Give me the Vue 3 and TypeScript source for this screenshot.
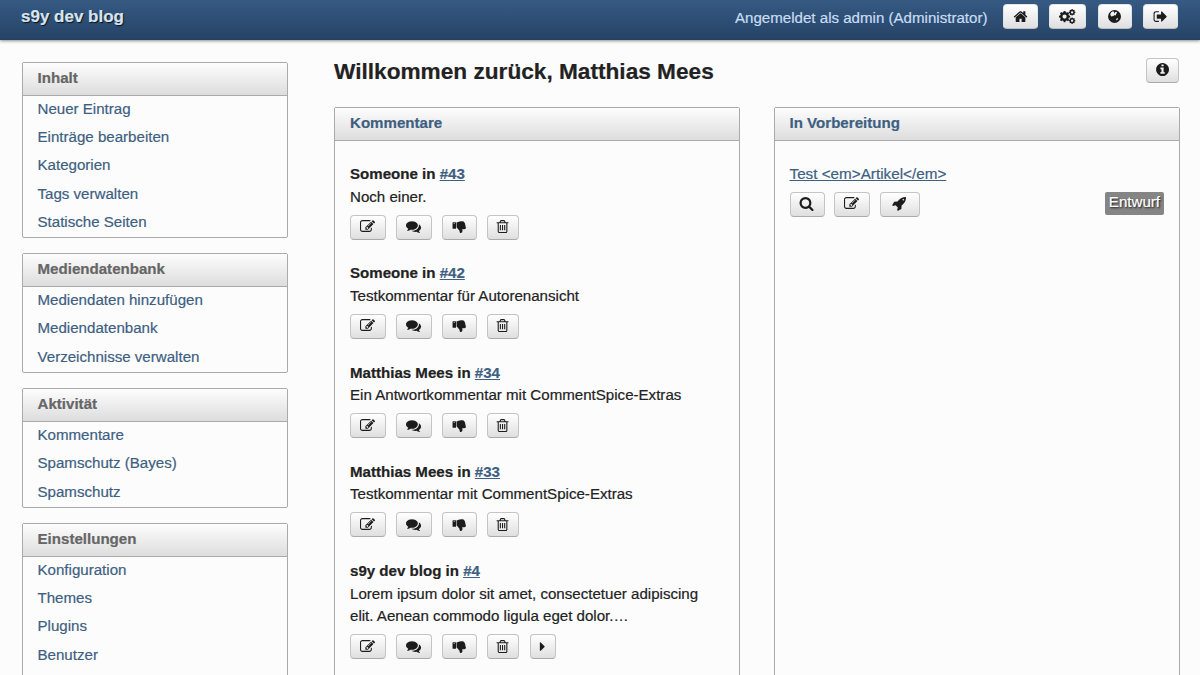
<script setup lang="ts">
type IconName =
  | 'home' | 'cogs' | 'globe' | 'signout' | 'info' | 'edit'
  | 'comments' | 'thumbs' | 'trash' | 'caret' | 'search' | 'rocket'

interface NavGroup { title: string; links: string[] }
interface Comment { author: string; id: number; text: string; more?: boolean }

const icons: Record<IconName, string> = {
  home: 'M1472 992v480q0 26-19 45t-45 19h-384v-384h-256v384h-384q-26 0-45-19t-19-45v-480q0-1 .5-3t.5-3l575-474 575 474q1 2 1 6zm223-69l-62 74q-8 9-21 11h-3q-13 0-21-7l-692-577-692 577q-12 8-24 7-13-2-21-11l-62-74q-8-10-7-23.5t11-21.5l719-599q32-26 76-26t76 26l244 204v-195q0-14 9-23t23-9h192q14 0 23 9t9 23v408l219 182q10 8 11 21.5t-7 23.5z',
  cogs: '',
  globe: 'M896 128A768 768 0 1 0 896 1664A768 768 0 1 0 896 128zM700 270L820 330L870 400L820 470L880 520L990 370L1090 330L1190 420L1150 520L1060 590L1090 680L1000 760L880 720L800 800L690 850L620 810L600 930L470 830L390 690L420 500L550 350zM1140 1120L1300 1080L1290 1220L1170 1330L1080 1300z',
  signout: 'M704 1440q0 4 1 20t.5 26.5-3 23.5-10 19.5-20.5 6.5h-320q-119 0-203.5-84.5t-84.5-203.5v-704q0-119 84.5-203.5t203.5-84.5h320q13 0 22.5 9.5t9.5 22.5q0 4 1 20t.5 26.5-3 23.5-10 19.5-20.5 6.5h-320q-66 0-113 47t-47 113v704q0 66 47 113t113 47h312l11.5 1 11.5 3 8 5.5 7 9 2 13.5zm928-544q0 26-19 45l-544 544q-19 19-45 19t-45-19-19-45v-288h-448q-26 0-45-19t-19-45v-384q0-26 19-45t45-19h448v-288q0-26 19-45t45-19 45 19l544 544q19 19 19 45z',
  info: 'M1152 1376v-160q0-14-9-23t-23-9h-96v-512q0-14-9-23t-23-9h-320q-14 0-23 9t-9 23v160q0 14 9 23t23 9h96v320h-96q-14 0-23 9t-9 23v160q0 14 9 23t23 9h448q14 0 23-9t9-23zm-128-896v-160q0-14-9-23t-23-9h-192q-14 0-23 9t-9 23v160q0 14 9 23t23 9h192q14 0 23-9t9-23zm640 416q0 209-103 385.5t-279.5 279.5-385.5 103-385.5-103-279.5-279.5-103-385.5 103-385.5 279.5-279.5 385.5-103 385.5 103 279.5 279.5 103 385.5z',
  edit: 'M888 1184l116-116-152-152-116 116v56h96v96h56zm440-720q-16-16-33 1l-350 350q-17 17-1 33t33-1l350-350q17-17 1-33zm80 594v190q0 119-84.5 203.5t-203.5 84.5h-832q-119 0-203.5-84.5t-84.5-203.5v-832q0-119 84.5-203.5t203.5-84.5h832q63 0 117 25 15 7 18 23 3 17-9 29l-49 49q-14 14-32 8-23-6-45-6h-832q-66 0-113 47t-47 113v832q0 66 47 113t113 47h832q66 0 113-47t47-113v-126q0-13 9-22l64-64q15-15 35-7t20 29zm-96-738l288 288-672 672h-288v-288zm444 132l-92 92-288-288 92-92q28-28 68-28t68 28l152 152q28 28 28 68t-28 68z',
  comments: 'M1408 768q0 139-94 257t-256.5 186.5-353.5 68.5q-86 0-176-16-124 88-278 128-36 9-86 16h-3q-11 0-20.5-8t-11.5-21q-1-3-1-6.5t.5-6.5 2-6l2.5-5 3.5-5.5 4-5 4.5-5 4-4.5q5-6 23-25t26-29.5 22.5-29 25-38.5 20.5-44q-124-72-195-177t-71-224q0-139 94-257t256.5-186.5 353.5-68.5 353.5 68.5 256.5 186.5 94 257zm384 256q0 120-71 224.5t-195 176.5q10 24 20.5 44t25 38.5 22.5 29 26 29.5 23 25q1 1 4 4.5t4.5 5 4 5 3.5 5.5l2.5 5 2 6 .5 6.5-1 6.5q-3 14-13 22t-22 7q-50-7-86-16-154-40-278-128-90 16-176 16-271 0-472-132 58 4 88 4 161 0 309-45t264-129q125-92 192-212t67-254q0-77-23-152 129 71 204 178t75 230z',
  thumbs: 'M128 384Q64 384 64 448V1088Q64 1152 128 1152H416Q480 1152 480 1088V448Q480 384 416 384zM256 450A64 64 0 1 1 256 578A64 64 0 1 1 256 450zM544 384Q640 370 790 315Q940 256 1080 256H1230Q1500 256 1500 490Q1590 570 1568 700Q1640 790 1600 900Q1664 980 1664 1050Q1650 1216 1472 1216H1195Q1248 1330 1248 1440Q1248 1664 1024 1664Q960 1664 930 1590Q905 1520 890 1430Q870 1350 790 1280L640 1085Q590 1024 544 1024z',
  trash: 'M704 736v576q0 14-9 23t-23 9h-64q-14 0-23-9t-9-23v-576q0-14 9-23t23-9h64q14 0 23 9t9 23zm256 0v576q0 14-9 23t-23 9h-64q-14 0-23-9t-9-23v-576q0-14 9-23t23-9h64q14 0 23 9t9 23zm256 0v576q0 14-9 23t-23 9h-64q-14 0-23-9t-9-23v-576q0-14 9-23t23-9h64q14 0 23 9t9 23zm128 724v-948h-896v948q0 22 7 40.5t14.5 27 10.5 8.5h832q3 0 10.5-8.5t14.5-27 7-40.5zm-672-1076h448l-48-117q-7-9-17-11h-317q-10 2-17 11zm928 32v64q0 14-9 23t-23 9h-96v948q0 83-47 143.5t-113 60.5h-832q-66 0-113-58.5t-47-141.5v-952h-96q-14 0-23-9t-9-23v-64q0-14 9-23t23-9h309l70-167q15-37 54-63t79-26h320q40 0 79 26t54 63l70 167h309q14 0 23 9t9 23z',
  caret: 'M1152 896q0 26-19 45l-448 448q-19 19-45 19t-45-19-19-45v-896q0-26 19-45t45-19 45 19l448 448q19 19 19 45z',
  search: 'M1216 832q0-185-131.5-316.5t-316.5-131.5-316.5 131.5-131.5 316.5 131.5 316.5 316.5 131.5 316.5-131.5 131.5-316.5zm512 832q0 52-38 90t-90 38q-54 0-90-38l-343-342q-179 124-399 124-143 0-273.5-55.5t-225-150-150-225-55.5-273.5 55.5-273.5 150-225 225-150 273.5-55.5 273.5 55.5 225 150 150 225 55.5 273.5q0 220-124 399l343 343q37 37 37 90z',
  rocket: 'M1440 448q0-40-28-68t-68-28-68 28-28 68 28 68 68 28 68-28 28-68zm224-288q0 249-75.5 430.5t-253.5 360.5q-81 80-195 176l-20 379q-2 16-16 26l-384 224q-7 4-16 4-12 0-23-9l-64-64q-13-14-8-32l85-276-281-281-276 85q-3 1-9 1-14 0-23-9l-64-64q-17-19-5-39l224-384q10-14 26-16l379-20q96-114 176-195 188-187 358-258t431-71q14 0 24 9.5t10 22.5z',
}

// Builds a toothed wheel with a round hole.
function gear(cx: number, cy: number, outer: number, inner: number, hole: number, teeth: number): string {
  const step = (Math.PI * 2) / teeth
  const pts: string[] = []
  for (let i = 0; i < teeth; i++) {
    const shape: [number, number][] = [[-0.3, inner], [-0.2, outer], [0.2, outer], [0.3, inner]]
    for (const [offset, r] of shape) {
      const a = (i + offset) * step
      pts.push(`${(cx + Math.cos(a) * r).toFixed(1)} ${(cy + Math.sin(a) * r).toFixed(1)}`)
    }
  }
  return `M${pts.join('L')}zM${cx - hole} ${cy}a${hole} ${hole} 0 1 0 ${hole * 2} 0a${hole} ${hole} 0 1 0 ${-hole * 2} 0z`
}
icons.cogs = gear(660, 896, 680, 540, 250, 8) + gear(1560, 400, 390, 320, 140, 8) + gear(1560, 1390, 390, 320, 140, 8)

const topActions: IconName[] = ['home', 'cogs', 'globe', 'signout']
const draftActions: IconName[] = ['search', 'edit', 'rocket']
const commentActions: IconName[] = ['edit', 'comments', 'thumbs', 'trash']

const labels: Record<IconName, string> = {
  home: 'Startseite', cogs: 'Einstellungen', globe: 'Blog', signout: 'Abmelden', info: 'Info',
  edit: 'Bearbeiten', comments: 'Antworten', thumbs: 'Verbergen', trash: 'Löschen',
  caret: 'Mehr', search: 'Vorschau', rocket: 'Veröffentlichen',
}

const nav: NavGroup[] = [
  { title: 'Inhalt', links: ['Neuer Eintrag', 'Einträge bearbeiten', 'Kategorien', 'Tags verwalten', 'Statische Seiten'] },
  { title: 'Mediendatenbank', links: ['Mediendaten hinzufügen', 'Mediendatenbank', 'Verzeichnisse verwalten'] },
  { title: 'Aktivität', links: ['Kommentare', 'Spamschutz (Bayes)', 'Spamschutz'] },
  { title: 'Einstellungen', links: ['Konfiguration', 'Themes', 'Plugins', 'Benutzer'] },
]

const comments: Comment[] = [
  { author: 'Someone', id: 43, text: 'Noch einer.' },
  { author: 'Someone', id: 42, text: 'Testkommentar für Autorenansicht' },
  { author: 'Matthias Mees', id: 34, text: 'Ein Antwortkommentar mit CommentSpice-Extras' },
  { author: 'Matthias Mees', id: 33, text: 'Testkommentar mit CommentSpice-Extras' },
  { author: 's9y dev blog', id: 4, text: 'Lorem ipsum dolor sit amet, consectetuer adipiscing elit. Aenean commodo ligula eget dolor.…', more: true },
]

const draftTitle = 'Test <em>Artikel</em>'
const actionsFor = (c: Comment): IconName[] => (c.more ? [...commentActions, 'caret'] : commentActions)
</script>

<template>
  <div class="page">
    <header class="topbar">
      <a class="brand">s9y dev blog</a>
      <div class="user">
        <span class="user-name">Angemeldet als admin (Administrator)</span>
        <nav class="top-actions">
          <button v-for="name in topActions" :key="name" class="btn" :class="`btn-${name}`" :aria-label="labels[name]">
            <svg class="icon" :class="`icon-${name}`" :viewBox="name === 'cogs' ? '0 0 1960 1792' : '0 0 1792 1792'"><path fill-rule="evenodd" :d="icons[name]" /></svg>
          </button>
        </nav>
      </div>
    </header>

    <div class="body">
      <aside class="sidebar">
        <section v-for="group in nav" :key="group.title" class="box">
          <h3 class="box-title">{{ group.title }}</h3>
          <ul class="links">
            <li v-for="link in group.links" :key="link"><a>{{ link }}</a></li>
          </ul>
        </section>
      </aside>

      <main class="main">
        <div class="heading">
          <h2>Willkommen zurück, Matthias Mees</h2>
          <button class="btn btn-info" :aria-label="labels.info">
            <svg class="icon" viewBox="0 0 1792 1792"><path :d="icons.info" /></svg>
          </button>
        </div>

        <div class="panels">
          <section class="box panel">
            <h3 class="box-title accent">Kommentare</h3>
            <article v-for="c in comments" :key="c.id" class="comment">
              <h4>{{ c.author }} in <a>#{{ c.id }}</a></h4>
              <p>{{ c.text }}</p>
              <div class="actions">
                <button v-for="name in actionsFor(c)" :key="name" class="btn" :class="`btn-${name}`" :aria-label="labels[name]">
                  <svg class="icon" viewBox="0 0 1792 1792"><path fill-rule="evenodd" :d="icons[name]" /></svg>
                </button>
              </div>
            </article>
          </section>

          <section class="box panel">
            <h3 class="box-title accent">In Vorbereitung</h3>
            <article class="draft">
              <a class="draft-link">{{ draftTitle }}</a>
              <div class="draft-row">
                <div class="actions draft-actions">
                  <button v-for="name in draftActions" :key="name" class="btn" :class="`btn-${name}`" :aria-label="labels[name]">
                    <svg class="icon" viewBox="0 0 1792 1792"><path fill-rule="evenodd" :d="icons[name]" /></svg>
                  </button>
                </div>
                <span class="badge">Entwurf</span>
              </div>
            </article>
          </section>
        </div>
      </main>
    </div>
  </div>
</template>

<style>
html, body { margin: 0; background: #fcfcfc; overflow: hidden; }
</style>

<style scoped>
.page {
  box-sizing: border-box;
  width: 1200px;
  height: 675px;
  overflow: hidden;
  background: #fcfcfc;
  color: #222;
  font: 15.1px/22.6px "Liberation Sans", Arial, sans-serif;
  -webkit-text-stroke: 0.2px currentColor;
}
.page * { box-sizing: border-box; }
h2, h3, h4, p, ul { margin: 0; padding: 0; }
ul { list-style: none; }

.topbar {
  display: flex;
  justify-content: space-between;
  align-items: flex-start;
  height: 40px;
  padding: 0 22px 0 21px;
  background: linear-gradient(#365a83, #264366);
  border-bottom: 1px solid #25415f;
  box-shadow: 0 1px 3px rgba(0, 0, 0, 0.45);
}
.brand {
  margin-top: 6px;
  color: #d5e5f5;
  font-size: 17px;
  font-weight: bold;
  text-shadow: 1px 1px 1px #111;
}
.user { display: flex; }
.user-name { margin: 7px 15.5px 0 0; color: #c8def4; }
.top-actions { display: flex; gap: 11px; padding-top: 4px; }

.btn {
  display: flex;
  flex: none;
  align-items: center;
  justify-content: center;
  width: 35px;
  height: 25px;
  padding: 0 0 1px;
  border: 1px solid #c4c4c4;
  border-bottom-color: #aaa;
  border-radius: 4px;
  background: linear-gradient(#fff, #dfdfdf);
}
.topbar .btn { padding: 1px 0 0; border-color: #e4e4e4; border-bottom-color: #bbb; }
.icon { display: block; flex: none; width: 15.08px; height: 15.08px; fill: #1c1c1c; }
.icon-cogs { width: 16.5px; }
.btn-cogs { width: 37px; }
.topbar .btn-globe { width: 34px; margin-left: 1px; }
.btn-info { width: 33px; margin-right: 1px; }
.btn-info .icon { margin-left: 1px; }
.btn-trash { width: 32px; }
.btn-caret { width: 26px; margin-left: 1px; }
.btn-rocket { width: 40px; }
.btn-edit, .btn-comments { width: 36px; }

.body { display: flex; padding-left: 22px; }
.sidebar { width: 266px; padding-top: 22px; }
.box {
  border: 1px solid #aaa;
  border-radius: 2px;
}
.sidebar .box { margin-bottom: 15.1px; }
.sidebar .box:last-child { min-height: 200px; }
.box-title {
  height: 33px;
  padding: 4px 14.5px 0;
  border-bottom: 1px solid #aaa;
  background: linear-gradient(#fdfdfd, #ddd);
  color: #666;
  font-size: 15.1px;
  font-weight: bold;
}
.accent { color: #3e5f81; }
.links { padding-top: 0.4px; }
.links li { height: 28.27px; padding: 1.4px 14.5px 0; }
.links li:last-child { height: 27.87px; }
.links a { color: #3e5f81; }

.main { width: 845.5px; margin-left: 46px; }
.heading { display: flex; justify-content: space-between; height: 67px; padding-top: 18px; }
.heading h2 { font-size: 22.65px; line-height: 26px; }
.panels { display: flex; justify-content: space-between; height: 700px; }
.panel { width: 406px; }
.panel .box-title { padding-left: 15px; }

.comment { height: 99.25px; padding: 0 15px; }
.box-title + .comment { margin-top: 22px; }
.comment h4 { font-size: 15.08px; font-weight: bold; }
.comment a, .draft-link { color: #3e5f81; text-decoration: underline; }
.actions { display: flex; gap: 10px; padding-top: 6.4px; }
.draft-actions { gap: 9.5px; padding-top: 0; }
.draft { padding: 22px 15px 0; }
.draft-link { display: block; font-size: 15.25px; }
.draft-row { display: flex; justify-content: space-between; align-items: flex-start; padding-top: 6px; }
.badge {
  height: 23px;
  padding: 0 3.5px;
  border-radius: 2px;
  background: #858585;
  color: #fff;
  line-height: 20px;
  text-shadow: 1px 1px 2px #111;
}
</style>
